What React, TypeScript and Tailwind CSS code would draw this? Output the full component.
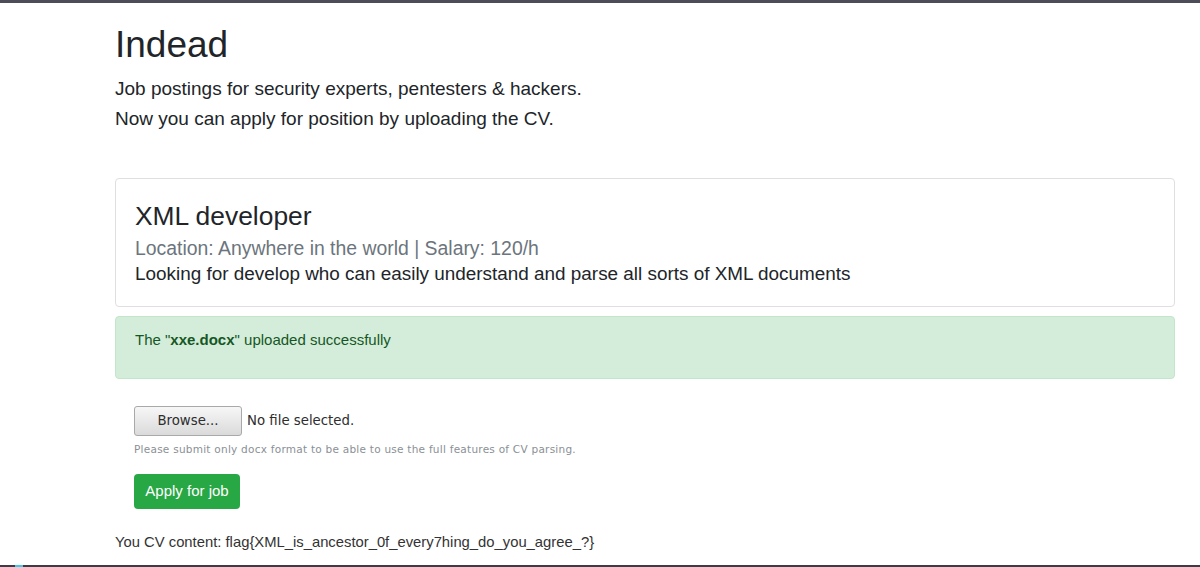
import React from 'react';

// Job posting page with an upload form and the parsed CV output

const sans = "font-['Liberation_Sans',Arial,sans-serif]";
const ui = "font-['DejaVu_Sans',sans-serif]";

const JobCard = () => (
  <div className="mt-[44px] rounded-[4px] border border-[#dfdfdf] bg-white px-[19px] pt-[21px] pb-[19px]">
    <h4 className="mb-[3px] text-[26.4px] leading-[32px] text-[#212529]">XML developer</h4>
    <div className="text-[19.4px] leading-[26px] text-[#6c757d]">
      Location: Anywhere in the world | Salary: 120/h
    </div>
    <div className="text-[18.9px] leading-[26px] text-[#212529]">
      Looking for develop who can easily understand and parse all sorts of XML documents
    </div>
  </div>
);

const UploadForm = () => (
  <div className="mt-[27px] pl-[19px]">
    <div className="flex items-center">
      <button
        className={`${ui} h-[30px] w-[108px] rounded-[3px] border border-[#a9a9a9] bg-gradient-to-b from-[#f7f7f7] to-[#dadada] text-[13.3px] text-[#2e2e2e]`}
      >
        Browse...
      </button>
      <span className={`${ui} ml-[5px] text-[13.3px] text-[#2e2e2e]`}>No file selected.</span>
    </div>
    <p className={`${ui} mt-[6px] text-[10.5px] leading-[14px] tracking-[0.25px] text-[#8a9096]`}>
      Please submit only docx format to be able to use the full features of CV parsing.
    </p>
    <button className="mt-[18px] h-[35px] w-[106px] rounded-[4px] bg-[#28a745] text-[15px] text-white">
      Apply for job
    </button>
  </div>
);

export default function App() {
  return (
    <div className={`${sans} flex min-h-[567px] flex-col bg-white`}>
      {/* window chrome line */}
      <div className="h-[3px] bg-[#4d4d5a]" />

      <div className="ml-[115px] w-[1060px]">
        <h1 className="mt-[20px] text-[37px] leading-[44px] text-[#212529]">Indead</h1>
        <div className="mt-[7px] text-[19px] leading-[30px] text-[#212529]">
          <p>Job postings for security experts, pentesters &amp; hackers.</p>
          <p>Now you can apply for position by uploading the CV.</p>
        </div>

        <JobCard />

        {/* upload result */}
        <div className="mt-[9px] rounded-[4px] border border-[#c3e6cb] bg-[#d4edda] px-[19px] pt-[12px] pb-[27px] text-[15px] leading-[22px] text-[#155724]">
          The "<b>xxe.docx</b>" uploaded successfully
        </div>

        <UploadForm />

        <p className="mt-[22px] text-[14.8px] leading-[22px] text-[#333333]">
          You CV content: flag{'{'}XML_is_ancestor_0f_every7hing_do_you_agree_?{'}'}
        </p>
      </div>

      <div className="mt-auto flex h-[2px] bg-[#3c3c46]">
        <span className="ml-[15px] h-full w-[8px] bg-[#3fc8e8]" />
      </div>
    </div>
  );
}
